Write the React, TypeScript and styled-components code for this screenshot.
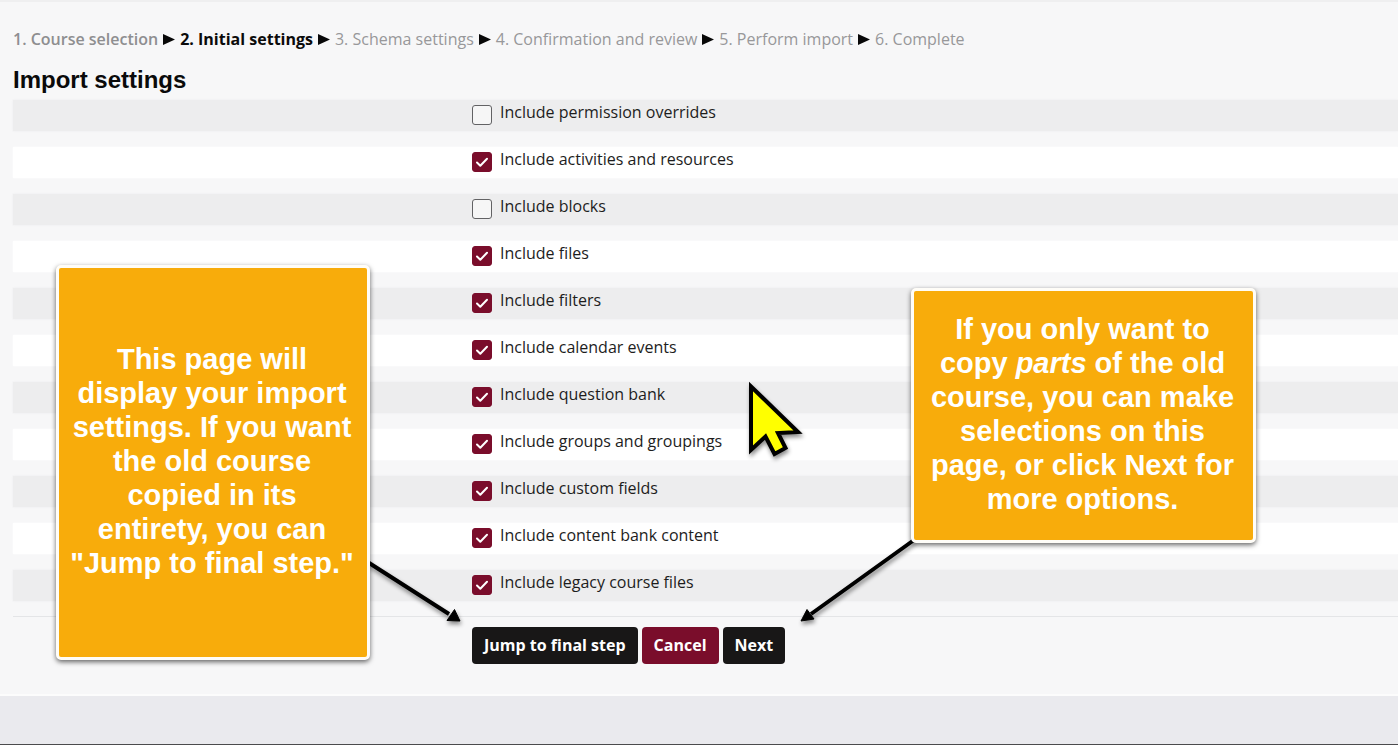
import React, { Fragment, useState } from "react";
import styled, { createGlobalStyle } from "styled-components";

const GlobalStyle = createGlobalStyle`
  *, *::before, *::after { box-sizing: border-box; }
  html, body, #root { min-height: 100vh; }
  body {
    margin: 0;
    background: #f7f7f8;
    color: #1d1d1d;
    font-family: "Open Sans", sans-serif;
    overflow-x: hidden;
  }
`;

const Page = styled.div`
  position: relative;
  display: flex;
  flex-direction: column;
  min-height: 100vh;
  overflow: hidden;
  border-top: 2px solid #efeff0;
`;

const Main = styled.main`
  padding: 25px 0 30px 13px;
  border-bottom: 2px solid #fcfcfc;
`;

const Steps = styled.nav`
  display: flex;
  flex-wrap: wrap;
  align-items: center;
  gap: 5px;
  font-size: 16px;
  line-height: 24px;
`;

const Step = styled.span<{ $state: "done" | "current" | "todo" }>`
  color: ${({ $state }) => ($state === "current" ? "#0b0b0b" : $state === "done" ? "#8e8e90" : "#98989a")};
  font-weight: ${({ $state }) => ($state === "todo" ? 400 : $state === "done" ? 600 : 700)};
`;

const Title = styled.h1`
  margin: 14px 0 6px;
  color: #0a0a0a;
  font: 700 24px/29px "Liberation Sans", Arial, sans-serif;
`;

const Settings = styled.div`
  display: flex;
  flex-direction: column;
  gap: 16px;
`;

const SettingRow = styled.div<{ $shaded: boolean }>`
  display: flex;
  align-items: flex-start;
  height: 31px;
  padding-left: 459px;
  background: ${({ $shaded }) => ($shaded ? "#ededee" : "#ffffff")};
  box-shadow: 0 0 2px ${({ $shaded }) => ($shaded ? "#ededee" : "#ffffff")};
`;

const SettingLabel = styled.label`
  display: flex;
  gap: 8px;
  font-size: 16px;
  line-height: 24px;
`;

const CheckWrap = styled.span`
  display: grid;
  width: 20px;
  height: 20px;
  margin-top: 5px;

  > * { grid-area: 1 / 1; }
  svg { pointer-events: none; }
`;

const Checkbox = styled.input`
  appearance: none;
  width: 20px;
  height: 20px;
  margin: 0;
  border: 1px solid #626264;
  border-radius: 3px;
  background: #f6f6f6;

  &:checked {
    border-color: #7a0d2b;
    background: #7a0d2b;
  }
`;

const Actions = styled.div`
  display: flex;
  flex-wrap: wrap;
  gap: 4px;
  margin-top: 15px;
  padding: 10px 0 0 459px;
  border-top: 1px solid #e4e5e7;
`;

const ActionButton = styled.button<{ $accent?: boolean }>`
  padding: 6px 12px 7px;
  border: 0;
  border-radius: 4px;
  background: ${({ $accent }) => ($accent ? "#7a0d2b" : "#181717")};
  color: #fff;
  font: 700 16px/24px "Open Sans", sans-serif;
`;

const Footer = styled.footer`
  flex: 1;
  min-height: 48px;
  background: #eaeaee;
  border-bottom: 1px solid #4b4b4d;
`;

const Callout = styled.aside<{ $x: number; $y: number; $w: number; $h: number }>`
  position: absolute;
  left: ${({ $x }) => $x}px;
  top: ${({ $y }) => $y}px;
  width: ${({ $w }) => $w}px;
  height: ${({ $h }) => $h}px;
  display: flex;
  align-items: center;
  justify-content: center;
  padding: 0 2px 4px 0;
  border: 3px solid #fffdf8;
  border-radius: 5px;
  background: #f8ac0b;
  box-shadow: 0 2px 5px rgba(0, 0, 0, 0.6);
  color: #fff;
  font: 700 29px/34px "Liberation Sans", Arial, sans-serif;
  text-align: center;
`;

const Markup = styled.svg`
  position: absolute;
  left: 0;
  top: -2px;
  pointer-events: none;
  filter: drop-shadow(1px 3px 2px rgba(0, 0, 0, 0.45));
`;

const steps: { text: string; state: "done" | "current" | "todo" }[] = [
  { text: "1. Course selection", state: "done" },
  { text: "2. Initial settings", state: "current" },
  { text: "3. Schema settings", state: "todo" },
  { text: "4. Confirmation and review", state: "todo" },
  { text: "5. Perform import", state: "todo" },
  { text: "6. Complete", state: "todo" },
];

const settings = [
  { text: "Include permission overrides", on: false },
  { text: "Include activities and resources", on: true },
  { text: "Include blocks", on: false },
  { text: "Include files", on: true },
  { text: "Include filters", on: true },
  { text: "Include calendar events", on: true },
  { text: "Include question bank", on: true },
  { text: "Include groups and groupings", on: true },
  { text: "Include custom fields", on: true },
  { text: "Include content bank content", on: true },
  { text: "Include legacy course files", on: true },
];

function Setting({ text, on, shaded }: { text: string; on: boolean; shaded: boolean }) {
  const [checked, setChecked] = useState(on);
  return (
    <SettingRow $shaded={shaded}>
      <SettingLabel>
        <CheckWrap>
          <Checkbox type="checkbox" checked={checked} onChange={() => setChecked(!checked)} />
          {checked && (
            <svg width="20" height="20" viewBox="0 0 20 20" fill="none" aria-hidden="true">
              <path d="M5 10.5 8.3 13.7 15 6.8" stroke="#fff" strokeWidth="2" strokeLinecap="round" strokeLinejoin="round" />
            </svg>
          )}
        </CheckWrap>
        {text}
      </SettingLabel>
    </SettingRow>
  );
}

export default function App() {
  return (
    <>
      <GlobalStyle />
      <Page>
        <Main>
          <Steps aria-label="Import steps">
            {steps.map((s, i) => (
              <Fragment key={s.text}>
                {i > 0 && (
                  <svg width="12" height="11" viewBox="0 0 12 11" aria-hidden="true">
                    <path d="M0 0 12 5.5 0 11z" fill="#080808" />
                  </svg>
                )}
                <Step $state={s.state} aria-current={s.state === "current" ? "step" : undefined}>{s.text}</Step>
              </Fragment>
            ))}
          </Steps>
          <Title>Import settings</Title>
          <Settings>
            {settings.map((s, i) => (
              <Setting key={s.text} text={s.text} on={s.on} shaded={i % 2 === 0} />
            ))}
          </Settings>
          <Actions>
            <ActionButton type="button">Jump to final step</ActionButton>
            <ActionButton type="button" $accent>Cancel</ActionButton>
            <ActionButton type="button">Next</ActionButton>
          </Actions>
        </Main>
        <Footer />
        <Markup width="1300" height="700" viewBox="0 0 1300 700" aria-hidden="true">
          <path d="M366 561 449 614M914 540 811 614" stroke="#000" strokeWidth="4" />
          <path d="M460 621 447 620.500 454.500 609.500z M801 621 807 609.500 814 619z" fill="#000" stroke="#000" />
          <path
            d="M751 386.500 798 432 778 433 785.500 448 774.500 454 765.500 436.500 751 450z"
            fill="#ff0"
            stroke="#000"
            strokeWidth="4"
            strokeMiterlimit="10"
          />
        </Markup>
        <Callout $x={56} $y={263} $w={314} $h={395}>
          <span>
            This page will<br />display your import<br />settings. If you want<br />the old course<br />copied in its<br />entirety, you can<br />"Jump to final step."
          </span>
        </Callout>
        <Callout $x={911} $y={286} $w={345} $h={255}>
          <span>
            If you only want to<br />copy <em>parts</em> of the old<br />course, you can make<br />selections on this<br />page, or click Next for<br />more options.
          </span>
        </Callout>
      </Page>
    </>
  );
}
